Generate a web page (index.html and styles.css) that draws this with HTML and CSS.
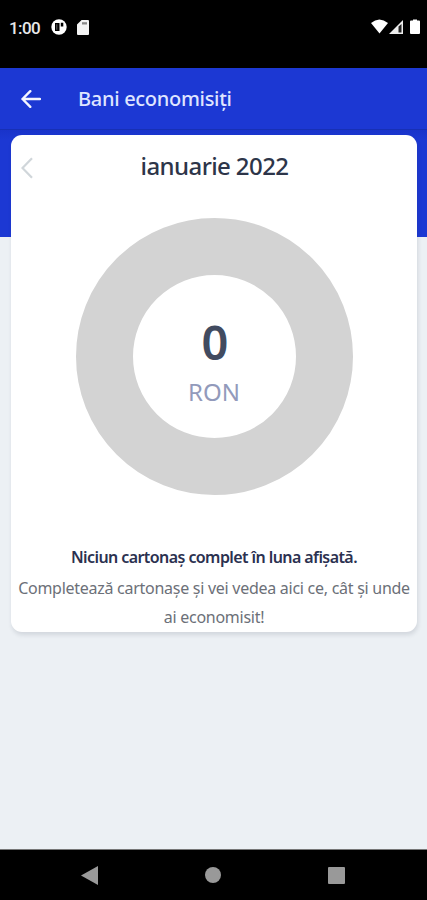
FILE: index.html
```html
<!DOCTYPE html>
<html lang="ro">
<head>
<meta charset="utf-8">
<title>Bani economisiți</title>
<link rel="stylesheet" href="styles.css">
</head>
<body>
<div class="screen">
  <header class="status">
    <span class="time">1:00</span>
    <svg class="notify" width="16" height="16" viewBox="0 0 16 16"><circle cx="8" cy="8" r="7.7" fill="#fff"/><path d="M4 4h4.500v8H4zM9.800 3.800h2.500v3.700H9.800z" fill="#000"/><path d="M5.300 5.300h1v5.400h-1z" fill="#666"/></svg>
    <svg class="sd" width="12" height="15" viewBox="0 0 12 15"><path d="M4.6 0H11q1 0 1 1v13q0 1-1 1H1q-1 0-1-1V4.6z" fill="#f4f4f4"/><path d="M5 2.2h5v2.3H5z" fill="#888"/></svg>
    <svg class="signals" width="50" height="16" viewBox="0 0 50 16"><path d="M0 4Q8.300-3 17 4L8.500 14.500Z" fill="#fff"/><path d="M18 15L32 1v14z" fill="#eee"/><path d="M27.500 7.500L30.500 5v8.500h-3z" fill="#222"/><path d="M40 1.500h2V.5h4v1h2q1 0 1 1V14q0 1-1 1h-8q-1 0-1-1V2.500q0-1 1-1z" fill="#fff"/></svg>
  </header>
  <nav class="appbar">
    <svg width="20" height="18" viewBox="0 0 20 18" fill="none" stroke="#f4f6ff" stroke-width="2.400" stroke-linecap="round" stroke-linejoin="round"><path d="M19 9H1.500M9.300 1.200L1.500 9l7.800 7.800"/></svg>
    <h1>Bani economisiți</h1>
  </nav>
  <main class="content">
    <section class="card">
      <div class="month">
        <svg width="12" height="22" viewBox="0 0 12 22" fill="none" stroke="#d0d6da" stroke-width="2.200"><path d="M11 1.200L1.500 11 11 20.800"/></svg>
        <h2>ianuarie 2022</h2>
      </div>
      <div class="ring">
        <span class="amount">0</span>
        <span class="currency">RON</span>
      </div>
      <p class="empty">Niciun cartonaș complet în luna afișată.</p>
      <p class="hint"><span class="line">Completează cartonașe și vei vedea aici ce, cât și unde</span> <span class="line">ai economisit!</span></p>
    </section>
  </main>
  <footer class="system">
    <svg width="17" height="19" viewBox="0 0 17 19"><path d="M0 9.500L17 0v19z" fill="#999"/></svg>
    <svg width="16" height="16" viewBox="0 0 16 16"><circle cx="8" cy="8" r="8" fill="#999"/></svg>
    <svg width="17" height="17" viewBox="0 0 17 17"><rect width="17" height="17" rx="1" fill="#999"/></svg>
  </footer>
</div>
</body>
</html>
```
FILE: styles.css
```css
* { box-sizing: border-box; }
body { margin: 0; font-family: "Noto Sans", sans-serif; }
h1, h2, p { margin: 0; }
svg { display: block; flex: none; }
.screen { width: 427px; height: 900px; display: flex; flex-direction: column; overflow: hidden; background: #ecf0f4; }
.status { height: 68px; flex: none; background: #000; display: flex; align-items: flex-start; padding: 19px 6px 0 9px; }
.time { width: 42px; color: #e8e8e8; font: 500 17px/18px Roboto, sans-serif; letter-spacing: -.6px; }
.sd { margin-left: 10px; margin-top: 1px; }
.signals { margin-left: auto; }
.appbar { height: 62px; flex: none; background: #1c38d3; border-bottom: 1px solid #1730b5; display: flex; align-items: center; gap: 37px; padding-left: 21px; }
.appbar h1 { color: #dfe5ff; font-size: 20px; line-height: 28px; font-weight: 500; letter-spacing: -.3px; white-space: nowrap; }
.content { flex: 1; padding: 5px 10px 0 11px; background: linear-gradient(#1933ca 0, #1c38d3 10px, #1c38d3 107px, #ecf0f4 107px); }
.card { height: 497px; background: #fff; border-radius: 11px; box-shadow: 1px 3px 4px rgba(40, 50, 70, .13); text-align: center; }
.month { height: 83px; display: flex; align-items: flex-start; padding: 14px 10px 0; }
.month svg { margin-top: 8px; }
.month h2 { flex: 1; padding-right: 11px; color: #2d3549; font-size: 24px; line-height: 34px; font-weight: 500; letter-spacing: -.6px; white-space: nowrap; }
.ring { width: 277px; height: 277px; margin: 0 auto; border: 57px solid #d3d3d3; border-radius: 50%; display: flex; flex-direction: column; align-items: center; padding-top: 40px; }
.amount { padding-left: 2px; font-size: 47px; line-height: 54px; font-weight: 600; color: #414b60; }
.currency { font-size: 24px; line-height: 30px; margin-top: 8px; color: #929abb; }
.empty { margin-top: 50px; font-size: 16px; line-height: 24px; font-weight: 600; letter-spacing: -.58px; color: #2b3150; white-space: nowrap; }
.hint { margin-top: 5px; font-size: 16px; line-height: 29px; letter-spacing: -.27px; color: #6c7078; }
.line { display: block; white-space: nowrap; }
.system { height: 51px; flex: none; background: #000; border-top: 1px solid #777; display: flex; align-items: center; justify-content: space-between; padding: 0 82px 0 81px; }
```
